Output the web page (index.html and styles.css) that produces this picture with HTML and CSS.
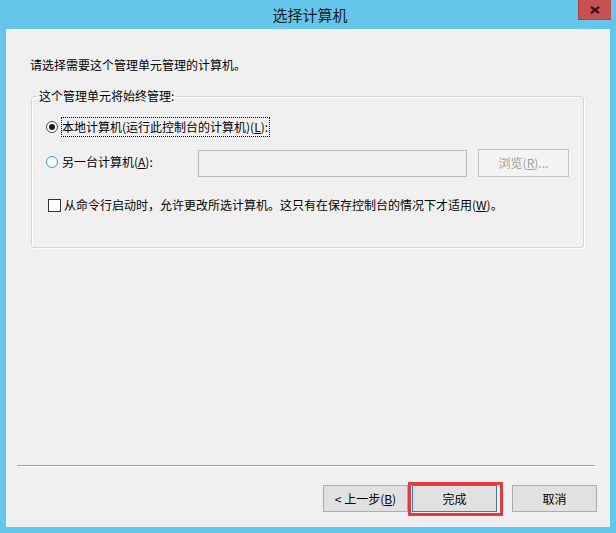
FILE: index.html
```html
<!DOCTYPE html>
<html lang="zh-CN">
<head>
    <meta charset="UTF-8">
    <title>选择计算机</title>
    <link rel="stylesheet" href="styles.css">
</head>
<body>
    <div class="window">
        <div class="titlebar">
            <span class="title">选择计算机</span>
            <button class="close" aria-label="关闭">
                <svg width="10" height="8" viewBox="0 0 10 8">
                    <path d="M1 0.8 L9 7.2 M9 0.8 L1 7.2" stroke="#2b1b1b" stroke-width="2.2" fill="none"/>
                </svg>
            </button>
        </div>

        <div class="client">
            <p class="intro">请选择需要这个管理单元管理的计算机。</p>

            <fieldset class="group">
                <legend>这个管理单元将始终管理:</legend>

                <div class="option local">
                    <span class="radio checked"></span>
                    <span class="focus">本地计算机(运行此控制台的计算机)(<u>L</u>):</span>
                </div>

                <div class="option other">
                    <span class="radio blue"></span>
                    <span class="other-label">另一台计算机(<u>A</u>):</span>
                    <span class="textbox"></span>
                    <span class="browse">浏览(<u>R</u>)...</span>
                </div>

                <div class="option check">
                    <span class="checkbox"></span>
                    <span>从命令行启动时，允许更改所选计算机。这只有在保存控制台的情况下才适用(<u>W</u>)。</span>
                </div>
            </fieldset>

            <div class="footer">
                <div class="separator"></div>
                <div class="buttons">
                    <button class="btn">&lt; 上一步(<u>B</u>)</button>
                    <span class="highlight-wrap">
                        <button class="btn default">完成</button>
                        <span class="highlight"></span>
                    </span>
                    <button class="btn cancel">取消</button>
                </div>
            </div>
        </div>
    </div>
</body>
</html>
```

FILE: styles.css
```css
body {
    margin: 0;
    width: 616px;
    height: 533px;
    background: #63c6ea; /* window frame colour */
    font-family: "Noto Sans CJK SC", "Liberation Sans", sans-serif;
    font-size: 12px;
    line-height: 16px;
    color: #000;
    overflow: hidden;
}

.window {
    padding: 0 6px 6px 6px;
}

.titlebar {
    position: relative;
    height: 29px;
    display: flex;
    justify-content: center;
    align-items: center;
}

.title {
    font-size: 15px;
    color: #1b1b1b;
    margin-left: 4px;
}

.close {
    position: absolute;
    top: 0;
    right: -1px;
    width: 33px;
    height: 20px;
    padding: 0;
    border: none;
    border-left: 1px solid #a84040;
    border-bottom: 1px solid #a84040;
    background: #c75050;
    display: flex;
    justify-content: center;
    align-items: center;
}

.client {
    height: 498px;
    box-sizing: border-box;
    background: #f0f0f0;
    padding: 28px 0 15px 0;
    display: flex;
    flex-direction: column;
}

.intro {
    margin: 0 0 0 24px;
}

/* group box */
.group {
    margin: 15px 26px 0 25px;
    padding: 13px 0 34px 0;
    border: 1px solid #d5d5d5;
    border-radius: 3px;
    box-shadow: inset 1px 1px 0 #fff, 1px 1px 0 #fff;
}

.group legend {
    margin-left: 5px;
    padding: 0 2px;
    line-height: 16px;
}

.option {
    display: flex;
    align-items: center;
    margin-left: 14px;
}

.local {
    height: 20px;
}

.other {
    height: 28px;
    margin-top: 12px;
}

.check {
    height: 16px;
    margin-top: 20px;
    margin-left: 16px;
}

.radio {
    width: 12px;
    height: 12px;
    box-sizing: border-box;
    border-radius: 50%;
    border: 1px solid #4a4a4a;
    background: #fff;
    flex-shrink: 0;
    display: flex;
    justify-content: center;
    align-items: center;
}

.radio.checked::after {
    content: "";
    width: 6px;
    height: 6px;
    border-radius: 50%;
    background: #1a1a1a;
}

.radio.blue {
    border-color: #4e9ad8;
    background: #f4f9fd;
    margin-top: -2px;
}

.focus {
    margin-left: 3px;
    padding: 1px 1px 1px 0;
    border: 1px dotted #000;
    line-height: 16px;
}

.other-label {
    width: 136px;
    margin-left: 4px;
    margin-top: -2px;
}

.textbox {
    width: 269px;
    height: 27px;
    box-sizing: border-box;
    border: 1px solid #b9b9b9;
    background: #f0f0f0;
    margin-top: 1px;
}

.browse {
    width: 91px;
    height: 28px;
    box-sizing: border-box;
    margin-left: 11px;
    border: 1px solid #c4c4c4;
    background: #f4f4f4;
    color: #a0a0a0;
    display: flex;
    justify-content: center;
    align-items: center;
}

.checkbox {
    width: 13px;
    height: 13px;
    box-sizing: border-box;
    border: 1px solid #333;
    background: #fff;
    margin-right: 3px;
    flex-shrink: 0;
}

/* bottom area */
.footer {
    margin-top: auto;
}

.separator {
    margin: 0 15px 0 11px;
    border-top: 1px solid #a0a0a0;
    border-bottom: 1px solid #fff;
}

.buttons {
    display: flex;
    justify-content: flex-end;
    margin-top: 18px;
    padding-right: 13px;
}

.btn {
    width: 85px;
    height: 27px;
    padding: 0;
    border: 1px solid #adadad;
    background: #e1e1e1;
    font-family: inherit;
    font-size: 12px;
    color: #000;
}

.highlight-wrap {
    position: relative;
    margin-left: 4px;
    display: flex;
}

.btn.default {
    border-color: #3c7fb1;
}

.highlight {
    position: absolute;
    left: -4px;
    right: -6px;
    top: -3px;
    bottom: -4px;
    border: 3px solid #e5393e;
}

.cancel {
    margin-left: 15px;
}
```
